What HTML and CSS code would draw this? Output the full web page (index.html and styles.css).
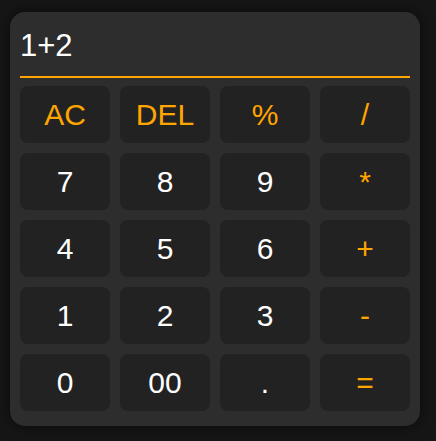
FILE: index.html
```html
<!DOCTYPE html>
<html lang="en">
<head>
<meta charset="utf-8">
<title>Calculator</title>
<link rel="stylesheet" href="styles.css">
</head>
<body>
<div class="calc">
  <div class="display">1+2</div>
  <div class="keys">
    <button class="key op">AC</button>
    <button class="key op">DEL</button>
    <button class="key op">%</button>
    <button class="key op">/</button>
    <button class="key">7</button>
    <button class="key">8</button>
    <button class="key">9</button>
    <button class="key op">*</button>
    <button class="key">4</button>
    <button class="key">5</button>
    <button class="key">6</button>
    <button class="key op">+</button>
    <button class="key">1</button>
    <button class="key">2</button>
    <button class="key">3</button>
    <button class="key op">-</button>
    <button class="key">0</button>
    <button class="key">00</button>
    <button class="key">.</button>
    <button class="key op">=</button>
  </div>
</div>
</body>
</html>
```
FILE: styles.css
```css
html, body {
  margin: 0;
  height: 100%;
}
body {
  background: #161616;
  padding: 12px 0 0 10px;
  box-sizing: border-box;
  font-family: "Liberation Sans", Arial, sans-serif;
}
.calc {
  width: 410px;
  box-sizing: border-box;
  background: #2d2d2d;
  border-radius: 15px;
  padding: 10px 10px 15px;
  box-shadow: 0 0 15px rgba(0, 0, 0, 0.6);
}
.display {
  box-sizing: border-box;
  height: 56px;
  display: flex;
  align-items: center;
  padding: 0 0 7px 0;
  border-bottom: 2px solid #ffa500;
  color: #fff;
  font-size: 31px;
  margin-bottom: 8px;
}
.keys {
  display: grid;
  grid-template-columns: repeat(4, 90px);
  grid-auto-rows: 57px;
  gap: 10px;
}
.key {
  border: none;
  margin: 0;
  padding: 0;
  background: #222;
  border-radius: 8px;
  color: #fff;
  font-family: "Liberation Sans", Arial, sans-serif;
  font-size: 30px;
}
.key.op {
  color: #ffa500;
}
```
